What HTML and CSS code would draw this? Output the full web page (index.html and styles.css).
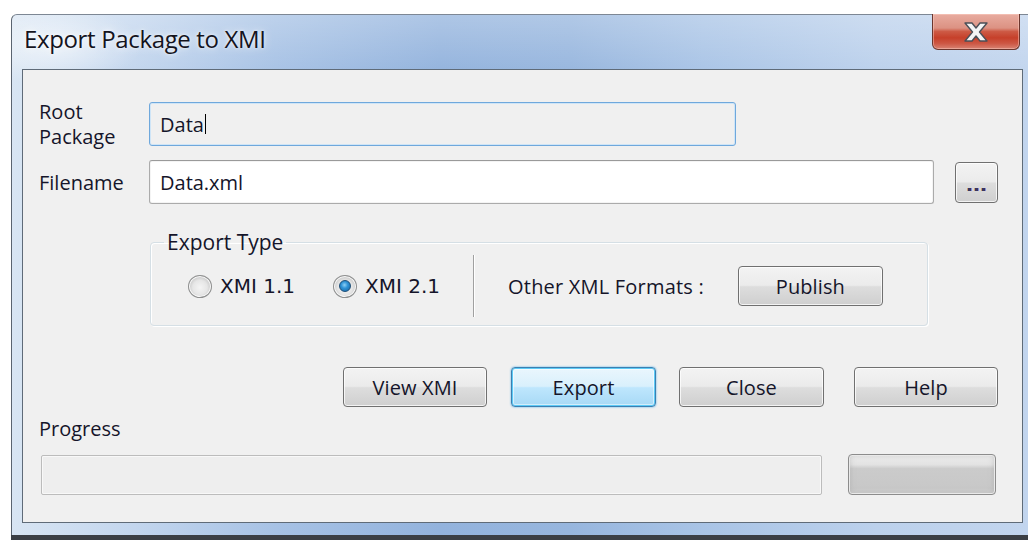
FILE: index.html
```html
<!DOCTYPE html>
<html lang="en">
<head>
<meta charset="utf-8">
<title>Export Package to XMI</title>
<link rel="stylesheet" href="styles.css">
</head>
<body>
<div class="screen">
  <div class="window">
    <div class="titlebar">
      <span class="title">Export Package to XMI</span>
      <button class="close-btn" aria-label="Close">
        <svg width="24" height="20" viewBox="-1 -1 24 20">
          <polygon points="0,0 7,0 11,5 15,0 22,0 14.5,9 22,18 15,18 11,13 7,18 0,18 7.5,9" fill="#f4f4f4" stroke="#4b4f57" stroke-width="1.4" stroke-linejoin="round"/>
        </svg>
      </button>
    </div>

    <div class="client">
      <div class="row row-root">
        <div class="label label-root">Root<br>Package</div>
        <div class="textbox textbox-root"><span>Data</span><span class="caret"></span></div>
      </div>

      <div class="row row-file">
        <div class="label">Filename</div>
        <div class="textbox textbox-file">Data.xml</div>
        <button class="btn btn-browse"><span class="dots"><i></i><i></i><i></i></span></button>
      </div>

      <fieldset class="group">
        <legend>Export Type</legend>
        <div class="group-body">
          <span class="radio"><span class="radio-ring"></span>XMI 1.1</span>
          <span class="radio radio-on"><span class="radio-ring"><span class="radio-dot"></span></span>XMI 2.1</span>
          <span class="sep"></span>
          <span class="other">Other XML Formats :</span>
          <button class="btn btn-publish">Publish</button>
        </div>
      </fieldset>

      <div class="actions">
        <button class="btn btn-action btn-view">View XMI</button>
        <button class="btn btn-action btn-default btn-export">Export</button>
        <button class="btn btn-action btn-close">Close</button>
        <button class="btn btn-action btn-help">Help</button>
      </div>

      <div class="label progress-label">Progress</div>
      <div class="progress-row">
        <div class="progress"></div>
        <button class="btn btn-blank"></button>
      </div>
    </div>
  </div>
  <div class="backdrop-edge"></div>
</div>
</body>
</html>
```

FILE: styles.css
```css
* { box-sizing: border-box; }

html, body {
  margin: 0;
  padding: 0;
  background: #ffffff;
  overflow: hidden;
}

.screen {
  width: 1028px;
  height: 540px;
  padding: 14px 0 0 11px;
  font-family: "Open Sans", "Noto Sans", sans-serif;
  color: #15152a;
}

/* Aero glass frame */
.window {
  width: 1017px;
  height: 521px;
  padding: 0 5px 12px 10px;
  border-radius: 6px 0 0 0;
  border-left: 1px solid #5a6470;
  border-top: 1px solid #7d8794;
  background:
    radial-gradient(ellipse 90px 40px at 40px 30px, rgba(255,255,255,0.55), rgba(255,255,255,0) 100%),
    linear-gradient(180deg, rgba(255,255,255,0.25) 0px, rgba(255,255,255,0) 60px),
    linear-gradient(90deg, #d8e5f3 0%, #c3d6ee 12%, #a7c2e5 26%, #93b3dd 42%, #97b6de 55%, #a9c4e6 68%, #bcd1ec 85%, #c2d5ee 100%);
  display: flex;
  flex-direction: column;
}

.titlebar {
  height: 54px;
  display: flex;
  justify-content: space-between;
  align-items: flex-start;
}

.title {
  margin: 7px 0 0 2px;
  font-size: 24px;
  line-height: 34px;
  color: #14141e;
  letter-spacing: -0.35px;
  text-shadow: 0 0 8px rgba(255,255,255,0.9), 0 0 3px rgba(255,255,255,0.8);
}

.close-btn {
  width: 88px;
  height: 36px;
  margin: -1px 3px 0 0;
  padding: 0;
  border: 1px solid #6b362e;
  border-top: none;
  border-radius: 0 0 6px 6px;
  background: linear-gradient(180deg, #e8aca0 0%, #dc9283 40%, #cd5a45 50%, #c6402a 68%, #cd5744 84%, #d88373 100%);
  box-shadow: inset 0 0 0 1px rgba(255,210,200,0.45);
  display: flex;
  align-items: center;
  justify-content: center;
}

/* Dialog client area */
.client {
  flex: 1;
  border: 1px solid #5f6b78;
  background: #f0f0f0;
  padding: 32px 24px 0 16px;
  font-size: 20px;
}

.row {
  display: flex;
  align-items: center;
}

.label {
  width: 110px;
  flex: none;
  font-size: 20px;
  line-height: 25px;
}

.row-root { height: 44px; }
.label-root { align-self: flex-start; margin-top: -3px; }

.textbox {
  height: 44px;
  border-radius: 3px;
  padding: 0 10px;
  display: flex;
  align-items: center;
  font-size: 20px;
}

.textbox-root {
  width: 587px;
  background: #f0f0f0;
  border: 1px solid #6fa8dc;
  box-shadow: inset 0 0 0 1px #cfe5f7;
}

.caret {
  width: 1px;
  height: 20px;
  margin-left: 1px;
  background: #000;
}

.row-file {
  height: 44px;
  margin-top: 14px;
}

.textbox-file {
  width: 785px;
  background: #ffffff;
  border: 1px solid #ababab;
  border-top-color: #9a9a9a;
  box-shadow: inset 0 0 0 1px #f4f4f4;
}

/* Push buttons */
.btn {
  font-family: inherit;
  font-size: 20px;
  letter-spacing: 0.1px;
  color: #15152a;
  border: 1px solid #707070;
  border-radius: 4px;
  padding: 0;
  background: linear-gradient(180deg, #f3f3f3 0%, #ebebeb 48%, #dddddd 52%, #cfcfcf 100%);
  box-shadow: inset 0 0 0 1px rgba(255,255,255,0.75);
}

.btn-browse {
  width: 43px;
  height: 41px;
  margin-left: 21px;
  display: flex;
  align-items: flex-end;
  justify-content: center;
  padding-bottom: 11px;
}

.dots { display: flex; gap: 4px; }
.dots i {
  display: block;
  width: 3px;
  height: 3px;
  background: #3a3560;
  box-shadow: -1px 0 0 rgba(200,120,40,0.6), 1px 0 0 rgba(60,90,220,0.6);
}

/* Export Type group */
.group {
  margin: 27px 0 0 111px;
  width: 778px;
  height: 95px;
  border: 1px solid #d5dfe5;
  border-radius: 4px;
  box-shadow: inset 1px 1px 0 #ffffff, 1px 1px 0 #ffffff;
  padding: 0;
}

.group legend {
  margin-left: 13px;
  padding: 0 3px;
  font-size: 21px;
  line-height: 22px;
}

.group-body {
  display: flex;
  align-items: center;
  height: 62px;
  margin-top: 2px;
  padding-left: 37px;
}

.radio {
  display: flex;
  align-items: center;
  font-family: "DejaVu Sans", sans-serif;
  font-size: 20px;
}

.radio + .radio { margin-left: 38px; }

.radio-ring {
  width: 24px;
  height: 23px;
  margin-right: 8px;
  border-radius: 50%;
  border: 1px solid #8e8f8f;
  background: radial-gradient(circle at 50% 55%, #f4f4f4 0%, #e6e6e6 45%, #c9c9c9 70%, #ececec 100%);
  box-shadow: inset 0 0 0 1px #f7f7f7;
  display: flex;
  align-items: center;
  justify-content: center;
}

.radio-dot {
  width: 12px;
  height: 12px;
  border-radius: 50%;
  border: 1px solid #1d4f78;
  background: radial-gradient(circle at 45% 40%, #8fd0f5 0%, #2f93d6 40%, #13609e 100%);
}

.sep {
  width: 2px;
  height: 62px;
  margin-left: 33px;
  border-left: 1px solid #a0a0a0;
  border-right: 1px solid #ffffff;
}

.other {
  margin-left: 33px;
  font-size: 20px;
  letter-spacing: 0.2px;
}

.btn-publish {
  width: 145px;
  height: 40px;
  margin-left: 34px;
}

/* Bottom command buttons */
.actions {
  display: flex;
  justify-content: flex-end;
  margin-top: 41px;
}

.btn-action {
  width: 144px;
  height: 40px;
}

.btn-export { width: 145px; margin-left: 24px; }
.btn-close { width: 145px; margin-left: 23px; }
.btn-help { margin-left: 30px; }

.btn-default {
  border-color: #3c7fb1;
  background: linear-gradient(180deg, #eaf6fd 0%, #d9f0fc 48%, #bee6fd 52%, #a7d9f5 100%);
  box-shadow: inset 0 0 0 1px #5ccbf7, inset 0 0 0 2px rgba(255,255,255,0.5), 0 0 2px #3aa6e8;
}

.progress-label {
  margin-top: 9px;
  line-height: 26px;
}

.progress-row {
  display: flex;
  align-items: center;
  margin-top: 12px;
}

.progress {
  width: 781px;
  height: 40px;
  margin-left: 2px;
  border: 1px solid #bcbcbc;
  border-radius: 2px;
  background: #eeeeee;
  box-shadow: inset 0 0 0 1px #f8f8f8;
}

.btn-blank {
  width: 148px;
  height: 41px;
  margin-left: 26px;
  border-color: #8c8c8c;
  background: linear-gradient(180deg, #f1f1f1 0%, #e2e2e2 25%, #cbcbcb 35%, #c8c8c8 85%, #d4d4d4 100%);
  box-shadow: inset 0 0 0 1px #e9e9e9, inset 0 0 6px rgba(150,150,150,0.5);
}

.backdrop-edge {
  height: 6px;
  background: #3b3f45;
}
```
